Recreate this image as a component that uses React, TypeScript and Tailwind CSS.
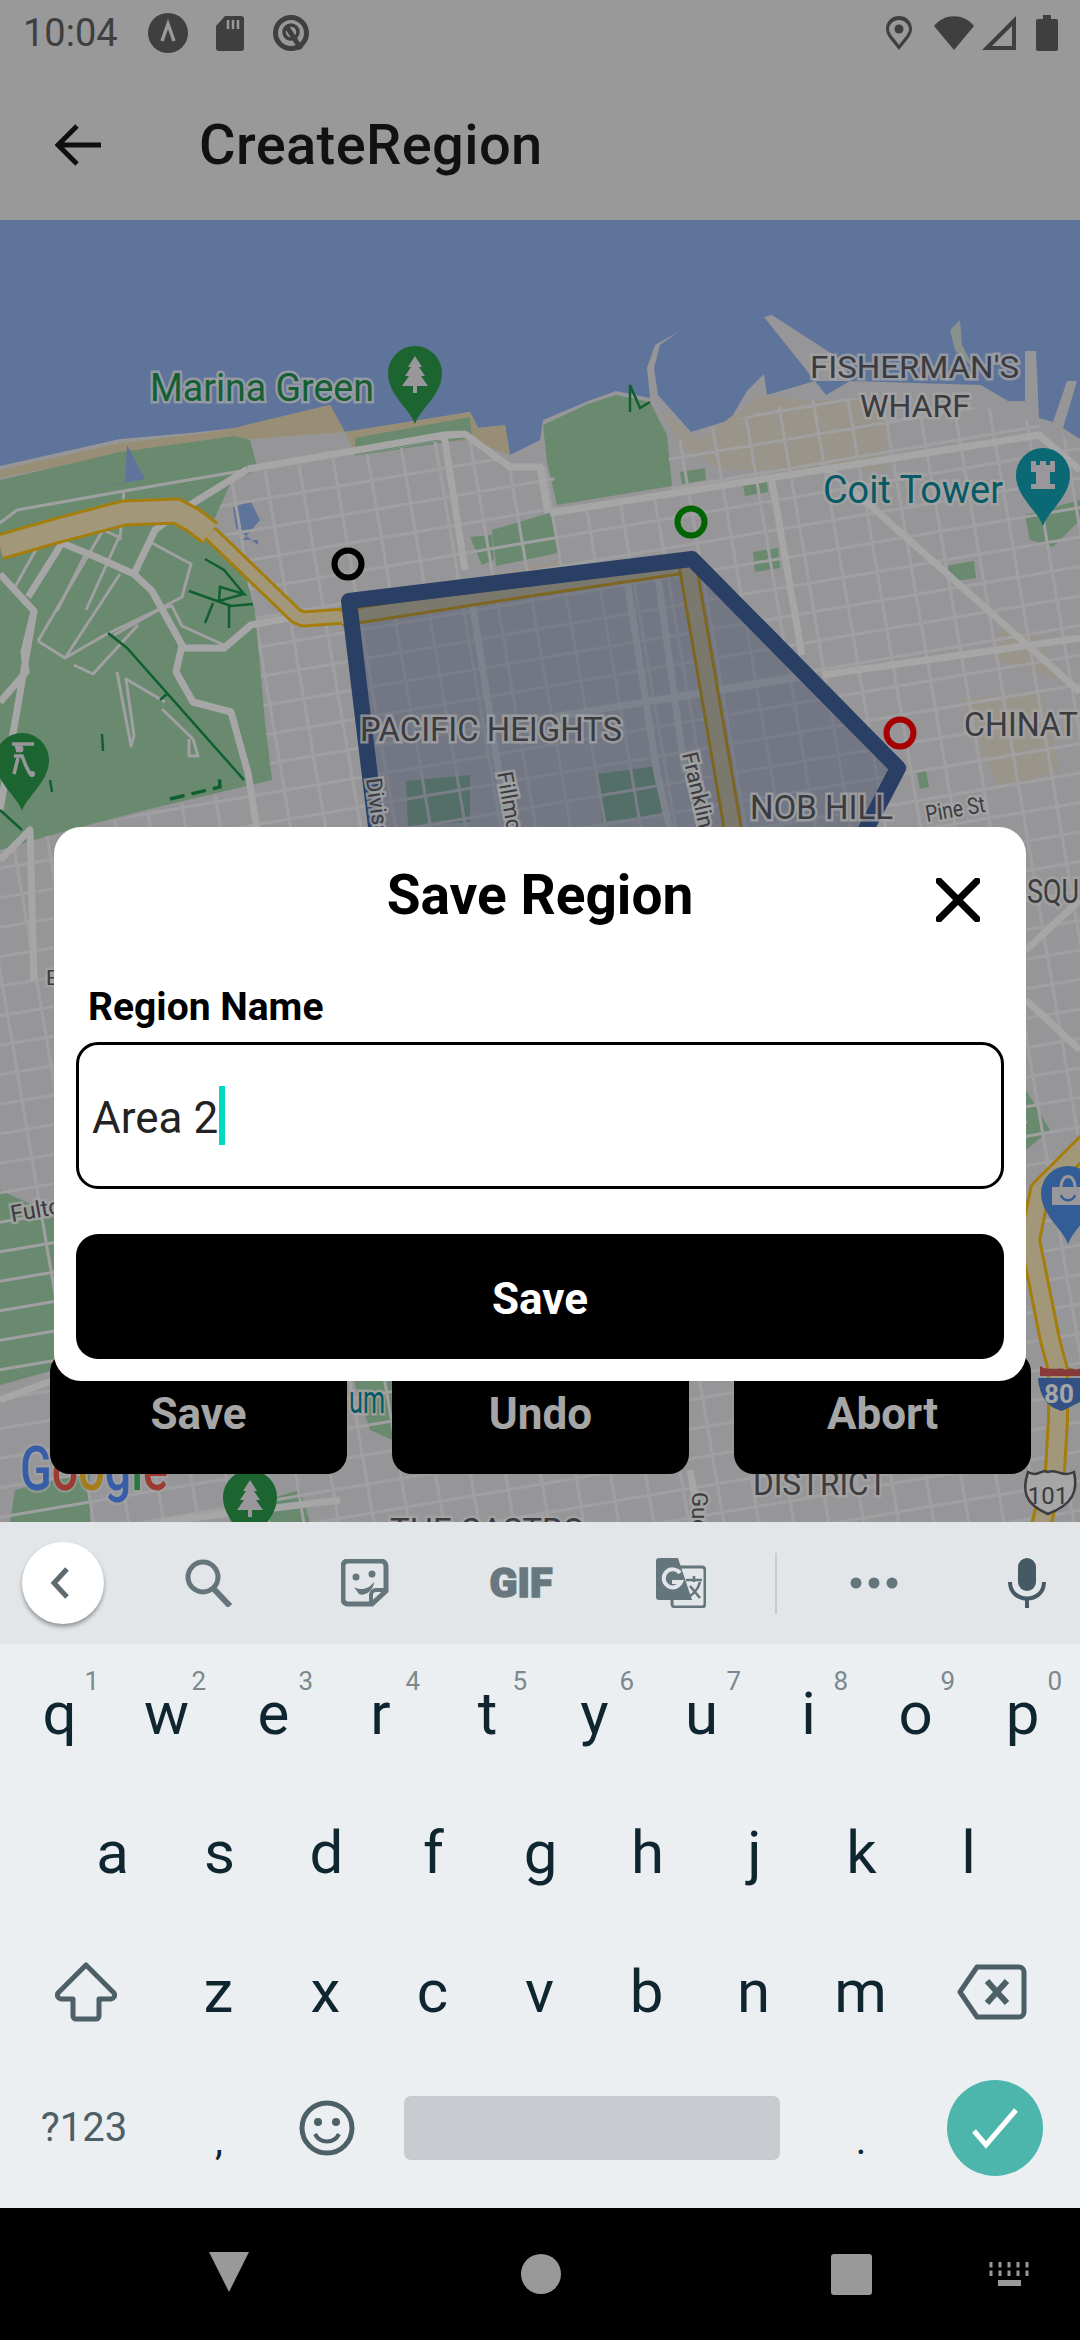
const ROBOTO = "font-['Roboto',sans-serif]";

const numberRow = ["1", "2", "3", "4", "5", "6", "7", "8", "9", "0"];

// street grid, a slight tilt like the real map
function gridPath() {
  let d = "";
  for (let i = -10; i < 30; i++) {
    const x = 270 + 35 * i;
    d += `M${x + 0.17 * (400 - 500)} 400L${x + 0.17 * (1530 - 500)} 1530`;
  }
  for (let j = -6; j < 42; j++) {
    const y = 470 + 29.5 * j;
    d += `M0 ${y + 0.17 * 260}L1080 ${y - 0.17 * 820}`;
  }
  return d;
}

const arterials = [
  "M550 513L1039 435L1080 470",
  "M822 675L1080 638",
  "M826 466L1080 692",
  "M771 476L802 655",
  "M540 719L815 675",
  "M626 574L657 773L670 830",
  "M657 570L685 773",
  "M472 601L499 773L510 830",
  "M444 435L465 570",
  "M248 469L444 435L465 434L510 467L540 467L548 513",
  "M134 574L155 530L182 510L248 469",
  "M0 810L34 611",
  "M0 574L34 611L24 652L26 672L0 702",
  "M28 597L62 543L96 557L134 574L152 591L182 645L176 672L193 702L231 712L248 773L257 830",
  "M182 648L224 648L251 625L300 616",
  "M0 860L30 830L34 980",
  "M900 1180L1026 1120",
  "M0 1400L54 1380",
  "M690 1470L700 1522",
  "M160 1522L340 1500",
  "M1026 950L1080 900",
  "M1026 1000L1080 1050",
];

const parkRoads = [
  "M0 523L17 510L124 491L241 471",
  "M15 587L43 537",
  "M38 641L103 530L119 537L86 610",
  "M57 611L86 553",
  "M65 658L120 574",
  "M38 641L65 658L105 635L155 611L182 597L191 564L152 543",
  "M74 665L93 674L138 625",
  "M117 672L131 746L134 736L126 679L165 702",
  "M162 709L193 739L198 756L189 756L189 739",
  "M114 635L162 608L172 606L182 626L224 645",
  "M124 491L120 540",
];

const trails = [
  "M108 633L127 648L244 780",
  "M102 734L103 751",
  "M205 559L224 570L244 594L220 587L219 601L244 594",
  "M189 591L231 606L253 604",
  "M213 603L205 623",
  "M229 604L229 628",
  "M160 700L168 693",
  "M50 780L52 792",
  "M0 810L22 830",
  "M630 412L630 385L640 408L650 402",
];

function Pin({ x, y, fill, children }: { x: number; y: number; fill: string; children?: React.ReactNode }) {
  return (
    <g transform={`translate(${x} ${y})`}>
      <path d="M0 51C-5 36 -27 22 -27 0A27 27 0 0 1 27 0C27 22 5 36 0 51Z" fill={fill} />
      {children}
    </g>
  );
}

const Tree = () => <path d="M0 -17L7 -6H4L10 3H6L13 13H2V20H-2V13H-13L-6 3H-10L-4 -6H-7Z" fill="#ece8ee" />;

function Label({
  x,
  y,
  w,
  size,
  fill = "#5b5b63",
  rot,
  children,
}: {
  x: number;
  y: number;
  w?: number;
  size: number;
  fill?: string;
  rot?: number;
  children: React.ReactNode;
}) {
  return (
    <text
      x={x}
      y={y}
      fontSize={size}
      fill={fill}
      stroke="#ffffff"
      strokeOpacity={0.75}
      strokeWidth={5}
      paintOrder="stroke"
      textLength={w}
      lengthAdjust={w ? "spacingAndGlyphs" : undefined}
      transform={rot ? `rotate(${rot} ${x} ${y})` : undefined}
    >
      {children}
    </text>
  );
}

function MapView() {
  return (
    <svg viewBox="0 220 1080 1302" className="block h-[1302px] w-[1080px] bg-[#92b2ee] font-['Roboto',sans-serif]">
      <defs>
        <clipPath id="city">
          <path d="M258 472L465 436L510 470L553 465L558 510L672 490L667 445L720 425L815 395L1008 410L1080 445V1522H0V845L69 832L158 809L272 782L265 722L255 610L250 590L214 540L214 520L232 480Z" />
        </clipPath>
      </defs>

      {/* land and piers */}
      <path
        d="M0 466L120 439L190 433L235 428L330 405L345 432L470 412L478 428L505 425L510 455L540 440L543 420L588 401L616 391L650 398L647 368L655 345L678 332L660 345L654 368L658 395L691 432L730 420L747 391L764 374L767 395L815 381L826 395L850 381L981 385L1008 401L1025 401L1025 351L1036 351L1039 418L1053 422L1067 381L1077 381L1063 428L1080 439V1522H0Z"
        fill="#e7e5ea"
      />
      <path d="M764 317L772 315L843 361L850 381L815 381Z" fill="#e7e5ea" />
      <path d="M950 330L960 320L962 345L975 370L955 350Z" fill="#d3dfd8" />

      {/* sand */}
      <path d="M0 470L120 443L198 434L235 428L250 424L330 405L345 432L238 440L120 454L0 478Z" fill="#eadbb4" />
      <path d="M345 432L470 412L478 428L505 425L510 455L470 440L352 448Z" fill="#eadbb4" />
      <path d="M660 410L700 440L760 395L800 400L885 400L885 470L720 470L680 445Z" fill="#ece5d5" />
      <path d="M960 700L1040 690L1060 770L1000 790Z" fill="#ece5d5" />
      <path d="M1000 620L1040 640L1060 680L1000 660Z" fill="#ece5d5" />
      <path d="M380 600L560 560L540 590L370 620Z" fill="#ece5d5" />

      {/* parks */}
      <path
        d="M0 480L120 452L235 436L250 440L258 470L232 480L214 520L216 540L240 552L250 590L255 610L265 722L272 780L158 807L69 830L0 850Z"
        fill="#a3d4ac"
      />
      <path d="M355 438L470 417L472 438L355 456Z" fill="#a3d4ac" />
      <path d="M543 425L588 404L616 395L650 402L667 435L672 486L557 505L547 462Z" fill="#a3d4ac" />
      <path d="M492 530L553 512L558 553L496 566Z" fill="#a3d4ac" />
      <path d="M470 537L492 535L494 560L482 565Z" fill="#a3d4ac" />
      <path d="M680 472L705 468L706 480L682 484Z" fill="#a3d4ac" />
      <path d="M743 486L767 482L768 492L745 496Z" fill="#a3d4ac" />
      <path d="M753 552L778 548L780 568L755 572Z" fill="#a3d4ac" />
      <path d="M946 566L974 561L976 578L950 582Z" fill="#a3d4ac" />
      <path d="M917 772L926 770L929 787L920 789Z" fill="#a3d4ac" />
      <path d="M1025 515L1080 500V520L1053 547L1030 540Z" fill="#a3d4ac" />
      <path d="M406 781L470 775L470 822L408 826Z" fill="#a3d4ac" />
      <path d="M598 774L658 766L662 815L602 822Z" fill="#a3d4ac" />
      <path d="M0 1190L54 1215V1370L0 1385Z" fill="#a3d4ac" />
      <path d="M15 1490L90 1470V1522H10Z" fill="#a3d4ac" />
      <path d="M230 1510L300 1490L310 1522H230Z" fill="#a3d4ac" />
      <path d="M350 1370L392 1370V1440L370 1430Z" fill="#a3d4ac" />
      <path d="M1026 1090L1050 1130L1026 1150Z" fill="#a3d4ac" />

      {/* water bits on land */}
      <path d="M17 503L125 482L127 445L145 479L90 489L18 503Z" fill="#92b2ee" />
      <path d="M233 508L250 500L260 520L243 540L258 540L258 545L236 528Z" fill="#92b2ee" />

      {/* roads */}
      <path d={gridPath()} clipPath="url(#city)" stroke="#f6f5f7" strokeWidth={3} fill="none" />
      <path d={parkRoads.join("")} stroke="#f6f5f7" strokeWidth={3} fill="none" strokeLinejoin="round" />
      <path d={arterials.join("")} stroke="#ffffff" strokeWidth={7} fill="none" strokeLinejoin="round" />

      {/* trails */}
      <path d={trails.join("")} stroke="#179249" strokeWidth={2.5} fill="none" />
      <path d="M170 799L220 787L219 773" stroke="#179249" strokeWidth={3.5} strokeDasharray="15 7" fill="none" />

      {/* highways */}
      {[
        { d: "M0 547L59 530L124 513L176 511L193 520L210 533", w: 27 },
        { d: "M210 533L296 616L303 619L345 616", w: 17 },
        { d: "M341 618L540 587L688 565", w: 18 },
        { d: "M688 567L733 830", w: 20 },
        { d: "M1090 1140L1040 1190L1030 1240L1040 1290L1050 1340L1058 1370L1058 1420L1055 1470L1040 1530", w: 22 },
      ].map((h) => (
        <g key={h.d} fill="none" strokeLinejoin="round">
          <path d={h.d} stroke="#fcc010" strokeWidth={h.w} />
          <path d={h.d} stroke="#fbe8bc" strokeWidth={h.w - 6} />
        </g>
      ))}

      {/* drawn region */}
      <path
        d="M349 601L692 559L898 768L850 860H380Z"
        fill="#324b82"
        fillOpacity={0.3}
        stroke="#41619a"
        strokeWidth={16}
        strokeLinejoin="round"
      />
      <circle cx={348} cy={564} r={13.5} fill="none" stroke="#000000" strokeWidth={6} />
      <circle cx={691} cy={522} r={13.5} fill="none" stroke="#009a00" strokeWidth={6} />
      <circle cx={900} cy={733} r={13.5} fill="none" stroke="#ff0000" strokeWidth={6} />

      {/* pins */}
      <Pin x={415} y={373} fill="#2c9a4a">
        <Tree />
      </Pin>
      <Pin x={22} y={760} fill="#2c9a4a">
        <path d="M-10 -16H12M-6 -16L-4 -8M-8 -4H0L4 6L8 14M-4 -2L-8 14" stroke="#ece8ee" strokeWidth={3.5} fill="none" />
        <circle cx={-2} cy={-11} r={3.5} fill="#ece8ee" />
        <circle cx={10} cy={14} r={3} fill="#ece8ee" />
      </Pin>
      <Pin x={1043} y={475} fill="#12a0b4">
        <path d="M-12 -14H-7V-10H-3V-14H3V-10H7V-14H12V-3H7V9H12V14H-12V9H-7V-3H-12Z" fill="#ece8ee" />
      </Pin>
      <Pin x={250} y={1497} fill="#2c9a4a">
        <Tree />
      </Pin>
      <Pin x={1068} y={1193} fill="#4d8fe6">
        <path d="M-16 -6H16V12H-16Z" fill="#ece8ee" />
        <path d="M-7 -6C-7 -20 7 -20 7 -6" stroke="#ece8ee" strokeWidth={3} fill="none" />
        <path d="M-7 2C-5 9 5 9 7 2" stroke="#4d8fe6" strokeWidth={2.5} fill="none" />
      </Pin>

      {/* labels, only the part the dialog and buttons leave visible */}
      <Label x={150} y={401} w={224} size={38} fill="#1f9250">Marina Green</Label>
      <Label x={810} y={378} w={209} size={32}>FISHERMAN'S</Label>
      <Label x={860} y={417} w={110} size={32}>WHARF</Label>
      <Label x={823} y={503} w={180} size={38} fill="#0a8a9c">Coit Tower</Label>
      <Label x={360} y={741} w={262} size={33}>PACIFIC HEIGHTS</Label>
      <Label x={964} y={736} w={114} size={33}>CHINAT</Label>
      <Label x={750} y={819} w={143} size={33}>NOB HILL</Label>
      <Label x={927} y={822} w={60} size={23} rot={-10}>Pine St</Label>
      <Label x={366} y={779} size={22} rot={82}>Divisa</Label>
      <Label x={497} y={773} size={22} rot={80}>Fillmo</Label>
      <Label x={682} y={754} size={22} rot={77}>Franklin</Label>
      <Label x={46} y={985} size={21}>E</Label>
      <Label x={12} y={1222} size={23} rot={-10}>Fulto</Label>
      <Label x={1027} y={903} w={52} size={33}>SQU</Label>
      <Label x={349} y={1413} w={36} size={38} fill="#0a8a9c">um</Label>
      <Label x={753} y={1495} w={134} size={33}>DISTRICT</Label>
      <Label x={390} y={1542} w={195} size={33}>THE CASTRO</Label>
      <Label x={692} y={1492} size={22} rot={90}>Gue</Label>
      <text x={20} y={1490} fontSize={62} fontWeight={500} stroke="#ffffff" strokeOpacity={0.5} strokeWidth={5} paintOrder="stroke" textLength={148} lengthAdjust="spacingAndGlyphs">
        <tspan fill="#5590ff">G</tspan>
        <tspan fill="#f25a4c">o</tspan>
        <tspan fill="#ffc02a">o</tspan>
        <tspan fill="#5590ff">g</tspan>
        <tspan fill="#40b860">l</tspan>
        <tspan fill="#f25a4c">e</tspan>
      </text>

      {/* highway shields */}
      <path d="M1038 1378H1080V1402L1062 1411C1050 1408 1040 1400 1038 1378Z" fill="#4d7fcc" />
      <path d="M1040 1366C1050 1372 1060 1366 1066 1370C1072 1366 1076 1372 1080 1368V1376H1040Z" fill="#d05a5a" />
      <text x={1059} y={1403} fontSize={26} fontWeight={700} fill="#ffffff" textAnchor="middle">80</text>
      <path d="M1028 1472C1038 1478 1042 1468 1048 1472C1056 1468 1062 1478 1074 1472C1078 1490 1074 1504 1048 1514C1024 1504 1022 1490 1028 1472Z" fill="#ffffff" stroke="#5b5b63" strokeWidth={2.5} />
      <text x={1048} y={1504} fontSize={24} fill="#5b5b63" textAnchor="middle">101</text>
    </svg>
  );
}

function StatusBar() {
  return (
    <div className="flex h-[66px] items-center justify-between bg-[#ebebeb] pl-[23px] pr-[22px] text-[#616161]">
      <div className="flex items-center">
        <span className="text-[38px] leading-none">10:04</span>
        <svg viewBox="0 0 40 40" className="ml-[30px] h-[40px] w-[40px]">
          <circle cx={20} cy={20} r={20} fill="#616161" />
          <path d="M14 28L20 11L26 28" stroke="#ebebeb" strokeWidth={3.5} fill="none" />
        </svg>
        <svg viewBox="0 0 28 35" className="ml-[28px] h-[35px] w-[28px]">
          <path d="M9 0H25A3 3 0 0 1 28 3V32A3 3 0 0 1 25 35H3A3 3 0 0 1 0 32V10Z" fill="#616161" />
          <path d="M12 4V13M17 4V13M22 4V13" stroke="#ebebeb" strokeWidth={2.5} />
        </svg>
        <svg viewBox="0 0 40 40" className="ml-[27px] h-[40px] w-[40px]">
          <circle cx={20} cy={20} r={15.5} fill="none" stroke="#616161" strokeWidth={5} />
          <circle cx={20} cy={19} r={7} fill="none" stroke="#616161" strokeWidth={3.5} />
          <path d="M16 14L30 36" stroke="#616161" strokeWidth={5} />
        </svg>
      </div>
      <div className="flex items-center">
        <svg viewBox="0 0 26 34" className="h-[34px] w-[26px]">
          <path fillRule="evenodd" d="M13 0C5 0 0 6 0 13C0 20 8 27 13 34C18 27 26 20 26 13C26 6 21 0 13 0ZM13 4C18 4 23 8 23 13C23 18 17 23 13 29C9 23 3 18 3 13C3 8 8 4 13 4Z" fill="#616161" />
          <circle cx={13} cy={13} r={4.5} fill="#616161" />
        </svg>
        <svg viewBox="0 0 40 34" className="ml-[22px] h-[34px] w-[40px]">
          <path d="M0 10C10 -3 30 -3 40 10L20 34Z" fill="#616161" />
        </svg>
        <svg viewBox="0 0 34 34" className="ml-[8px] h-[34px] w-[34px]">
          <path fillRule="evenodd" d="M34 0V34H0ZM30 10L10 30H30Z" fill="#616161" />
        </svg>
        <svg viewBox="0 0 22 36" className="ml-[20px] h-[36px] w-[22px]">
          <path d="M7 0H15V4H20A2 2 0 0 1 22 6V34A2 2 0 0 1 20 36H2A2 2 0 0 1 0 34V6A2 2 0 0 1 2 4H7Z" fill="#616161" />
        </svg>
      </div>
    </div>
  );
}

function AppBar() {
  return (
    <div className="flex h-[154px] items-center bg-[#ebebeb] pl-[55px] pt-[4px] text-[#1b1b1b]">
      <svg viewBox="0 0 46 42" className="h-[42px] w-[46px]">
        <path d="M22 2L3 21L22 40M3 21H46" stroke="#171717" strokeWidth={5} fill="none" />
      </svg>
      <span className="ml-[98px] text-[56px] font-medium leading-none tracking-[0.4px]">CreateRegion</span>
    </div>
  );
}

function SaveDialog() {
  return (
    <div className="absolute left-[54px] top-[827px] w-[972px] rounded-[27px] bg-white px-[22px] pb-[22px] text-black">
      <div className="relative flex h-[136px] items-center justify-center">
        <span className="text-[55px] font-bold leading-none">Save Region</span>
        <svg viewBox="0 0 44 44" className="absolute right-[24px] top-[51px] h-[44px] w-[44px]">
          <path d="M3 3L41 41M41 3L3 41" stroke="#000000" strokeWidth={7} strokeLinecap="round" />
        </svg>
      </div>
      <div className="mb-[9px] mt-[18px] flex h-[52px] items-center pl-[12px] text-[39px] font-bold leading-none">
        Region Name
      </div>
      <div className="flex h-[147px] items-center rounded-[22px] border-[3px] border-black pl-[13px] text-[44px] text-[#222222]">
        <span className="pt-[4px] leading-none">Area 2</span>
        <span className="ml-[1px] h-[59px] w-[6px] bg-[#00dcc4]" />
      </div>
      <button className="mt-[45px] flex h-[125px] w-full items-center justify-center rounded-[22px] bg-black pt-[4px] text-[44px] font-bold text-white">
        Save
      </button>
    </div>
  );
}

function MapButtons() {
  return (
    <div className="absolute left-[50px] top-[1352px] flex w-[981px] justify-between">
      {["Save", "Undo", "Abort"].map((label) => (
        <button key={label} className="flex h-[122px] w-[297px] items-center justify-center rounded-[20px] bg-black pt-[2px] text-[44px] font-bold text-white">
          {label}
        </button>
      ))}
    </div>
  );
}

function SuggestionBar() {
  const tone = "#64757c";
  return (
    <div className="flex h-[122px] items-center bg-[#e2e6e9]">
      <div className="ml-[22px] flex h-[82px] w-[82px] items-center justify-center rounded-full bg-white shadow-[0_3px_4px_rgba(0,0,0,0.35)]">
        <svg viewBox="0 0 20 32" className="mr-[6px] h-[32px] w-[20px]">
          <path d="M17 2L4 16L17 30" stroke="#5f6b70" strokeWidth={5} fill="none" />
        </svg>
      </div>
      <svg viewBox="0 0 48 48" className="ml-[81px] h-[48px] w-[48px]">
        <circle cx={18} cy={18} r={15} fill="none" stroke={tone} strokeWidth={5} />
        <path d="M28 29L45 47" stroke={tone} strokeWidth={6} />
      </svg>
      <svg viewBox="0 0 48 48" className="ml-[108px] h-[48px] w-[48px]">
        <path d="M6 2H40A5 5 0 0 1 45 7V32L31 45H6A5 5 0 0 1 2 41V6A5 5 0 0 1 6 2Z" fill="none" stroke={tone} strokeWidth={5} />
        <path d="M30 45V36A5 5 0 0 1 35 31H45" fill="none" stroke={tone} strokeWidth={4} />
        <circle cx={15} cy={18} r={3.5} fill={tone} />
        <circle cx={31} cy={15} r={3.5} fill={tone} />
        <path d="M13 28C20 32 28 30 33 23C33 30 25 38 18 35Z" fill={tone} />
      </svg>
      <span className="ml-[100px] flex w-[64px] justify-center text-[41px] font-black leading-none text-[#68787e] [-webkit-text-stroke:1.5px_#68787e]">GIF</span>
      <svg viewBox="0 0 50 50" className="ml-[103px] h-[50px] w-[50px]">
        <rect x={16} y={9} width={33} height={40} rx={3} fill="#e2e6e9" stroke={tone} strokeWidth={3} />
        <path d="M3 0H22L36 42H3A3 3 0 0 1 0 39V3A3 3 0 0 1 3 0Z" fill={tone} />
        <path d="M24 15A9 9 0 1 0 25 24H16" fill="none" stroke="#e2e6e9" strokeWidth={4} />
        <path d="M30 22H46M38 18V24M44 24C42 32 36 38 30 40M34 28L44 40" fill="none" stroke={tone} strokeWidth={2.5} />
      </svg>
      <div className="ml-[69px] h-[61px] w-[2px] bg-[#c8ccd0]" />
      <svg viewBox="0 0 48 12" className="ml-[73px] h-[12px] w-[48px]">
        <circle cx={6} cy={6} r={5.5} fill={tone} />
        <circle cx={24} cy={6} r={5.5} fill={tone} />
        <circle cx={42} cy={6} r={5.5} fill={tone} />
      </svg>
      <svg viewBox="0 0 38 50" className="ml-[110px] h-[50px] w-[38px]">
        <rect x={10} y={0} width={18} height={33} rx={9} fill="#455a64" />
        <path d="M2 24C2 46 36 46 36 24M19 40V50" fill="none" stroke="#455a64" strokeWidth={4} />
      </svg>
    </div>
  );
}

function Key({ label, hint }: { label: string; hint?: string }) {
  return (
    <div className="relative flex h-[139px] w-[107px] items-center justify-center text-[60px] leading-none text-[#0f2530]">
      {label}
      {hint && <span className="absolute right-[14px] top-[24px] text-[26px] leading-none text-[#7b888e]">{hint}</span>}
    </div>
  );
}

function Keyboard() {
  return (
    <div className="h-[564px] bg-[#ebeff2]">
      <div className="flex pl-[6px]">
        {"qwertyuiop".split("").map((k, i) => (
          <Key key={k} label={k} hint={numberRow[i]} />
        ))}
      </div>
      <div className="flex pl-[59px]">
        {"asdfghjkl".split("").map((k) => (
          <Key key={k} label={k} />
        ))}
      </div>
      <div className="flex items-center">
        <div className="flex w-[165px] justify-center pl-[6px]">
          <svg viewBox="0 0 62 60" className="h-[60px] w-[62px]">
            <path d="M31 3L59 31A4 4 0 0 1 56 37H44V54A3 3 0 0 1 41 57H21A3 3 0 0 1 18 54V37H6A4 4 0 0 1 3 31Z" fill="none" stroke="#4d5f67" strokeWidth={5} strokeLinejoin="round" />
          </svg>
        </div>
        {"zxcvbnm".split("").map((k) => (
          <Key key={k} label={k} />
        ))}
        <div className="flex w-[156px] justify-center">
          <svg viewBox="0 0 70 56" className="h-[56px] w-[70px]">
            <path d="M20 3H62A5 5 0 0 1 67 8V48A5 5 0 0 1 62 53H20L3 28Z" fill="none" stroke="#4d5f67" strokeWidth={5} strokeLinejoin="round" />
            <path d="M30 17L50 39M50 17L30 39" stroke="#4d5f67" strokeWidth={6} />
          </svg>
        </div>
      </div>
      <div className="flex h-[134px] items-center">
        <div className="flex w-[165px] justify-center pl-[3px] text-[40px] leading-none text-[#4d5f67]">?123</div>
        <div className="flex w-[108px] justify-center pt-[26px] text-[40px] leading-none text-[#0f2530]">,</div>
        <div className="flex w-[108px] justify-center">
          <svg viewBox="0 0 56 56" className="h-[56px] w-[56px]">
            <circle cx={28} cy={28} r={25} fill="none" stroke="#4d5f67" strokeWidth={5} />
            <circle cx={19} cy={22} r={4} fill="#4d5f67" />
            <circle cx={37} cy={22} r={4} fill="#4d5f67" />
            <path d="M16 34C21 44 35 44 40 34" fill="none" stroke="#4d5f67" strokeWidth={4} />
          </svg>
        </div>
        <div className="ml-[23px] h-[64px] w-[376px] rounded-[7px] bg-[#c8ccd0]" />
        <div className="ml-[27px] flex w-[108px] justify-center pt-[26px] text-[40px] leading-none text-[#0f2530]">.</div>
        <div className="ml-[32px] flex h-[96px] w-[96px] items-center justify-center rounded-full bg-[#4db6ac]">
          <svg viewBox="0 0 48 42" className="h-[42px] w-[48px]">
            <path d="M3 24L15 38L45 3" fill="none" stroke="#ffffff" strokeWidth={5} />
          </svg>
        </div>
      </div>
    </div>
  );
}

function NavBar() {
  return (
    <div className="relative flex h-[132px] items-center bg-black">
      <svg viewBox="0 0 44 40" className="ml-[207px] mt-[-4px] h-[40px] w-[44px]">
        <path d="M2 0H42L22 40Z" fill="#999999" />
      </svg>
      <div className="ml-[270px] h-[40px] w-[40px] rounded-full bg-[#999999]" />
      <div className="ml-[270px] h-[41px] w-[41px] rounded-[3px] bg-[#999999]" />
      <svg viewBox="0 0 42 24" className="ml-[117px] h-[24px] w-[42px]">
        <path d="M2 0V8M11 0V8M20 0V8M29 0V8M38 0V8M2 12V20M11 12V20M20 12V20M29 12V20M38 12V20" stroke="#999999" strokeWidth={3} transform="scale(1 0.7)" />
        <rect x={9} y={18} width={23} height={6} fill="#999999" />
      </svg>
    </div>
  );
}

export default function App() {
  return (
    <div className={`flex h-[2340px] w-[1080px] flex-col overflow-hidden bg-white ${ROBOTO}`}>
      <div className="relative h-[1522px] overflow-hidden">
        <StatusBar />
        <AppBar />
        <MapView />
        <MapButtons />
        {/* modal scrim */}
        <div className="absolute inset-0 bg-black/35" />
        <SaveDialog />
      </div>
      <SuggestionBar />
      <Keyboard />
      <NavBar />
    </div>
  );
}
